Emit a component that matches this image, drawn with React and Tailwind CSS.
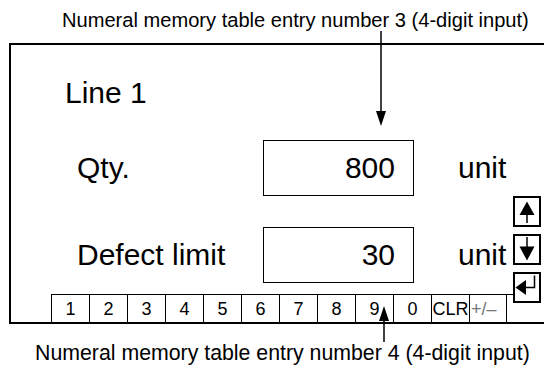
const keys = ["1", "2", "3", "4", "5", "6", "7", "8", "9", "0", "CLR", "+/–"];

function UpIcon() {
  return (
    <svg width="24" height="27" viewBox="0 0 24 27">
      <polygon points="12,3.5 4.5,17 19.5,17" fill="black" />
      <line x1="12" y1="16" x2="12" y2="25" stroke="black" strokeWidth="1.5" />
    </svg>
  );
}

function DownIcon() {
  return (
    <svg width="24" height="27" viewBox="0 0 24 27">
      <line x1="12" y1="1" x2="12" y2="11" stroke="black" strokeWidth="1.5" />
      <polygon points="4.5,10.5 19.5,10.5 12,24.5" fill="black" />
    </svg>
  );
}

function EnterIcon() {
  return (
    <svg width="24" height="27" viewBox="0 0 24 27">
      <polyline points="19.5,1.5 19.5,13.5 10,13.5" fill="none" stroke="black" strokeWidth="1.5" />
      <polygon points="0.5,13.5 11,6 11,21" fill="black" />
    </svg>
  );
}

function Field({ label, value }) {
  return (
    <div className="flex items-center h-[56px] pl-[66px]">
      <div className="w-[186px]">{label}</div>
      <div className="w-[151px] h-[56px] border border-black flex items-center justify-end pr-[18px]">
        {value}
      </div>
      <div className="ml-[44px]">unit</div>
    </div>
  );
}

export default function App() {
  return (
    <div
      className="relative w-[544px] h-[370px] bg-white text-black overflow-hidden"
      style={{ fontFamily: '"Liberation Sans", Arial, sans-serif' }}
    >
      <div className="h-[43px] pt-[10px] pl-[62px] text-[20.1px] leading-[20px] whitespace-nowrap">
        Numeral memory table entry number 3 (4-digit input)
      </div>

      <div className="ml-[9px] w-[540px] h-[281px] border-l-2 border-t-2 border-b-2 border-black text-[30px] leading-[30px]">
        <div className="h-[95px] pt-[33px] pl-[54px]">Line 1</div>
        <div className="flex">
          <div className="w-[502px] flex flex-col">
            <Field label="Qty." value="800" />
            <div className="mt-[31px]">
              <Field label="Defect limit" value="30" />
            </div>
            <div className="mt-[11px] ml-[40px] flex h-[28px] border-t border-black text-[18px] leading-[18px]">
              {keys.map((k, i) => (
                <div
                  key={k}
                  className={
                    i === keys.length - 1
                      ? "w-[38px] border-l border-r border-black flex items-center pl-[1px] text-[#777]"
                      : "w-[38px] border-l border-black flex items-center justify-center"
                  }
                >
                  {k}
                </div>
              ))}
            </div>
          </div>
          <div className="w-[28px] pt-[56px] flex flex-col gap-[7px]">
            <div className="h-[31px] border-2 border-black flex items-center justify-center">
              <UpIcon />
            </div>
            <div className="h-[31px] border-2 border-black flex items-center justify-center">
              <DownIcon />
            </div>
            <div className="h-[31px] border-2 border-black flex items-center justify-center">
              <EnterIcon />
            </div>
          </div>
        </div>
      </div>

      <div className="mt-[19px] pl-[35px] text-[21.3px] leading-[21px] whitespace-nowrap">
        Numeral memory table entry number 4 (4-digit input)
      </div>

      <svg className="absolute inset-0 pointer-events-none" width="544" height="370">
        <line x1="381" y1="31" x2="381" y2="114" stroke="black" strokeWidth="1.5" />
        <polygon points="376,111 386,111 381,126" fill="black" />
        <line x1="384" y1="318" x2="384" y2="342" stroke="black" strokeWidth="1.5" />
        <polygon points="379,321 389,321 384,306" fill="black" />
      </svg>
    </div>
  );
}
